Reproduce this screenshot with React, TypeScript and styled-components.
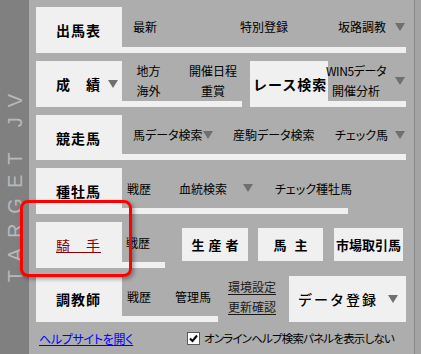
import styled, { createGlobalStyle } from "styled-components";

const GlobalStyle = createGlobalStyle`
  html, body {
    margin: 0;
    padding: 0;
    background: #adadad;
  }
  body {
    font-family: "Noto Sans CJK JP", "Noto Sans", sans-serif;
  }
`;

const Frame = styled.div`
  position: relative;
  display: flex;
  width: 421px;
  height: 354px;
  overflow: hidden;
  background: #adadad;
`;

const Sidebar = styled.div`
  width: 29px;
  flex-shrink: 0;
  background: #808080;
  display: flex;
  align-items: flex-end;
  justify-content: center;
  padding-bottom: 72px;
  box-sizing: border-box;
`;

const Brand = styled.div`
  writing-mode: vertical-rl;
  transform: rotate(180deg);
  font-family: "Liberation Sans", Arial, sans-serif;
  font-size: 20px;
  line-height: 20px;
  letter-spacing: 10px;
  color: #b8b8b8;
  white-space: pre;
`;

const Main = styled.div`
  flex: 1;
  display: flex;
  flex-direction: column;
  gap: 8px;
  padding: 7px 9px 0 7px;
  border-right: 6px solid #a4a4a4;
  box-shadow: inset -1px 0 0 #8a8a8a;
`;

const Row = styled.div`
  display: flex;
  height: 46px;
`;

const NavButton = styled.div<{ $w: number; $pl?: number; $red?: boolean }>`
  width: ${(p) => p.$w}px;
  flex-shrink: 0;
  box-sizing: border-box;
  padding-left: ${(p) => p.$pl ?? 20}px;
  display: flex;
  align-items: center;
  background: #f0f0f0;
  font-size: 14px;
  font-weight: ${(p) => (p.$red ? 400 : 700)};
  letter-spacing: 1px;
  color: ${(p) => (p.$red ? "#8b0000" : "#000")};
  text-decoration: ${(p) => (p.$red ? "underline" : "none")};
  text-underline-offset: 1px;
  white-space: pre;
`;

const Body = styled.div<{ $w?: number }>`
  ${(p) => (p.$w ? `width: ${p.$w}px; flex-shrink: 0;` : "flex: 1;")}
  display: flex;
  flex-direction: column;
`;

const Items = styled.div<{ $pl: number }>`
  flex: 1;
  display: flex;
  align-items: center;
  padding-left: ${(p) => p.$pl}px;
  font-size: 12px;
  font-feature-settings: "palt";
  color: #000;
  white-space: nowrap;
`;

const Strip = styled.div<{ $w?: number }>`
  height: 6px;
  width: ${(p) => (p.$w ? `${p.$w}px` : "100%")};
  background: #f0f0f0;
`;

const Cell = styled.div<{ $w?: number }>`
  ${(p) => (p.$w ? `width: ${p.$w}px;` : "")}
  flex-shrink: 0;
`;

const Stack = styled.div<{ $w: number; $ml?: number }>`
  width: ${(p) => p.$w}px;
  margin-left: ${(p) => p.$ml ?? 0}px;
  flex-shrink: 0;
  display: flex;
  flex-direction: column;
  align-items: center;
  gap: 3px;
  line-height: 17px;
`;

const Latin = styled.span`
  letter-spacing: -0.4px;
`;

const LinkStack = styled.div`
  display: flex;
  flex-direction: column;
  gap: 3px;
  line-height: 17px;
  font-feature-settings: normal;
  a {
    color: #1a1a1a;
    text-decoration: underline;
    text-underline-offset: 2px;
  }
`;

const Arrow = styled.span<{ $ml?: number; $mr?: number }>`
  display: inline-block;
  flex-shrink: 0;
  width: 0;
  height: 0;
  border-left: 5px solid transparent;
  border-right: 5px solid transparent;
  border-top: 8px solid #6f6f6f;
  margin-left: ${(p) => p.$ml ?? 0}px;
  margin-right: ${(p) => p.$mr ?? 0}px;
`;

const SmallButton = styled.div<{ $w: number; $ml: number; $ls: number }>`
  width: ${(p) => p.$w}px;
  height: 33px;
  flex-shrink: 0;
  align-self: flex-end;
  margin-bottom: 1px;
  margin-left: ${(p) => p.$ml}px;
  display: flex;
  align-items: center;
  justify-content: center;
  background: #f0f0f0;
  font-size: 13px;
  font-weight: 700;
  letter-spacing: ${(p) => p.$ls}px;
  text-indent: ${(p) => p.$ls}px;
  font-feature-settings: normal;
`;

const DataButton = styled.div`
  width: 117px;
  flex-shrink: 0;
  box-sizing: border-box;
  padding-left: 9px;
  display: flex;
  align-items: center;
  background: #f0f0f0;
  font-size: 14px;
  font-weight: 500;
  letter-spacing: 2px;
`;

const Footer = styled.div`
  flex: 1;
  display: flex;
  align-items: center;
  padding: 0 0 7px 3px;
  font-size: 12px;
  font-feature-settings: "palt";
  white-space: nowrap;
`;

const HelpLink = styled.a`
  width: 148px;
  flex-shrink: 0;
  color: #0000ff;
  letter-spacing: -0.3px;
  text-decoration: underline;
  text-underline-offset: 1px;
`;

const CheckBox = styled.span`
  width: 13px;
  height: 13px;
  box-sizing: border-box;
  flex-shrink: 0;
  background: #fff;
  border: 1px solid #5a5a5a;
  display: flex;
  align-items: center;
  justify-content: center;
`;

const CheckLabel = styled.span`
  margin-left: 4px;
  font-size: 11.5px;
  letter-spacing: -0.8px;
  color: #000;
`;

const Highlight = styled.div`
  position: absolute;
  left: 20px;
  top: 200px;
  width: 112px;
  height: 77px;
  box-sizing: border-box;
  border: 3px solid #ff0000;
  border-radius: 8px;
  box-shadow: 2px 2px 4px rgba(0, 0, 0, 0.35);
  pointer-events: none;
`;

export default function App() {
  return (
    <>
      <GlobalStyle />
      <Frame>
        <Sidebar>
          <Brand>TARGET JV</Brand>
        </Sidebar>
        <Main>
          <Row>
            <NavButton $w={86}>出馬表</NavButton>
            <Body>
              <Items $pl={11}>
                <Cell $w={107}>最新</Cell>
                <Cell $w={98}>特別登録</Cell>
                <Cell $w={57}>坂路調教</Cell>
                <Arrow />
              </Items>
              <Strip />
            </Body>
          </Row>

          <Row>
            <NavButton $w={86}>
              成　績
              <Arrow $ml={7} />
            </NavButton>
            <Body $w={128}>
              <Items $pl={15}>
                <Stack $w={23}>
                  <span>地方</span>
                  <span>海外</span>
                </Stack>
                <Stack $w={50} $ml={28}>
                  <span>開催日程</span>
                  <span>重賞</span>
                </Stack>
              </Items>
              <Strip $w={120} />
            </Body>
            <NavButton $w={78} $pl={3}>
              レース検索
            </NavButton>
            <Body>
              <Items $pl={0}>
                <Stack $w={56}>
                  <Latin>WIN5データ</Latin>
                  <span>開催分析</span>
                </Stack>
                <Arrow $ml={11} />
              </Items>
              <Strip />
            </Body>
          </Row>

          <Row>
            <NavButton $w={86}>競走馬</NavButton>
            <Body>
              <Items $pl={11}>
                <Cell $w={70}>馬データ検索</Cell>
                <Arrow $mr={20} />
                <Cell $w={102}>産駒データ検索</Cell>
                <Cell $w={60}>チェック馬</Cell>
                <Arrow />
              </Items>
              <Strip />
            </Body>
          </Row>

          <Row>
            <NavButton $w={86}>種牡馬</NavButton>
            <Body>
              <Items $pl={5}>
                <Cell $w={52}>戦歴</Cell>
                <Cell $w={64}>血統検索</Cell>
                <Arrow $mr={22} />
                <Cell>チェック種牡馬</Cell>
              </Items>
              <Strip $w={226} />
            </Body>
          </Row>

          <Row>
            <NavButton $w={86} $red>
              騎　手
            </NavButton>
            <Body>
              <Items $pl={4}>
                <Cell $w={56}>戦歴</Cell>
                <SmallButton $w={66} $ml={0} $ls={4}>
                  生産者
                </SmallButton>
                <SmallButton $w={65} $ml={10} $ls={8}>
                  馬主
                </SmallButton>
                <SmallButton $w={69} $ml={11} $ls={0}>
                  市場取引馬
                </SmallButton>
              </Items>
              <Strip $w={43} />
            </Body>
          </Row>

          <Row>
            <NavButton $w={86}>調教師</NavButton>
            <Body $w={167}>
              <Items $pl={5}>
                <Cell $w={48}>戦歴</Cell>
                <Cell $w={53}>管理馬</Cell>
                <LinkStack>
                  <a>環境設定</a>
                  <a>更新確認</a>
                </LinkStack>
              </Items>
              <Strip $w={96} />
            </Body>
            <DataButton>
              データ登録
              <Arrow $ml={10} />
            </DataButton>
          </Row>

          <Footer>
            <HelpLink>ヘルプサイトを開く</HelpLink>
            <CheckBox>
              <svg width="9" height="9" viewBox="0 0 9 9">
                <path d="M1 4.5 L3.5 7 L8 1.5" fill="none" stroke="#000" strokeWidth="2" />
              </svg>
            </CheckBox>
            <CheckLabel>オンラインヘルプ検索パネルを表示しない</CheckLabel>
          </Footer>
        </Main>
        <Highlight />
      </Frame>
    </>
  );
}
